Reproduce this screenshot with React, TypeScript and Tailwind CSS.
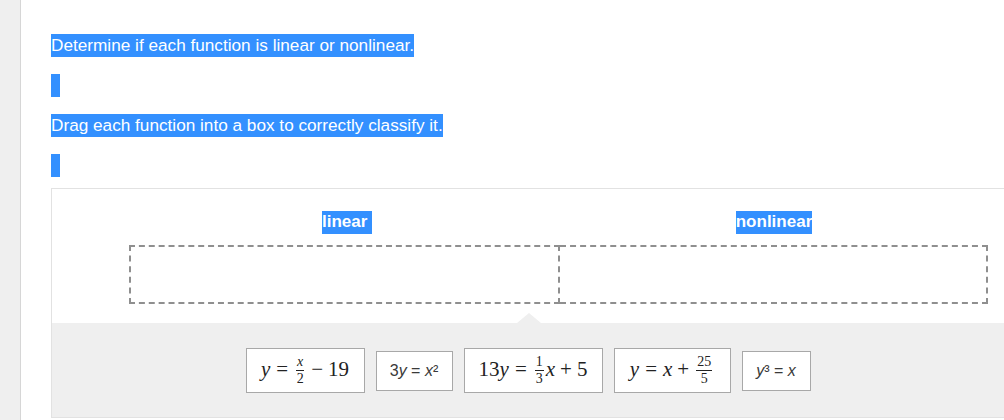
import React from "react";

const sel = "inline-block bg-[#3390ff] text-white";

function Frac({ n, d }: { n: React.ReactNode; d: string }) {
  return (
    <span className="mx-[2px] inline-flex flex-col items-center align-middle text-[14px] leading-[14px]">
      <span className="border-b border-[#222] px-[1px] pb-[1px]">{n}</span>
      <span className="pt-[1px]">{d}</span>
    </span>
  );
}

function MathTile({ w, children }: { w: string; children: React.ReactNode }) {
  return (
    <div
      className={`${w} flex h-[45px] items-center justify-center border border-[#a8a8a8] bg-white text-[21px] text-[#222]`}
      style={{ fontFamily: '"Liberation Serif", serif' }}
    >
      {children}
    </div>
  );
}

function TextTile({ w, children }: { w: string; children: React.ReactNode }) {
  return (
    <div className={`${w} mt-[2px] flex h-[40px] items-center justify-center border border-[#a8a8a8] bg-white text-[16px] text-[#3a3a3a]`}>
      {children}
    </div>
  );
}

const Rel = ({ c }: { c: string }) => <span className="mx-[6px]">{c}</span>;
const Bin = ({ c }: { c: string }) => <span className="mx-[5px]">{c}</span>;

export default function App() {
  return (
    <div
      className="flex h-[420px] w-[1004px] overflow-hidden bg-white"
      style={{ fontFamily: '"Liberation Sans", Arial, sans-serif' }}
    >
      <div className="h-full w-[21px] shrink-0 border-r border-[#d6d6d6] bg-[#efefef]" />
      <div className="shrink-0 pl-[30px] pt-[34px]">
        <div className="flex flex-col gap-[17px] text-[17.2px] leading-[23px]">
          <div className="h-[23px]">
            <span className={sel}>Determine if each function is linear or nonlinear. </span>
          </div>
          <div className="h-[23px]">
            <span className={`${sel} h-[23px] w-[9px]`} />
          </div>
          <div className="h-[23px]">
            <span className={sel}>Drag each function into a box to correctly classify it. </span>
          </div>
          <div className="h-[23px]">
            <span className={`${sel} h-[23px] w-[9px]`} />
          </div>
        </div>

        <div className="mt-[11px] w-[954px] border border-[#e2e2e2]">
          <div className="h-[134px] bg-white pt-[22px]">
            <div className="ml-[77px] grid w-[859px] grid-cols-[431px_428px]">
              <div className="flex h-[23px] justify-center">
                <span className={`${sel} ml-[5px] text-[17px] font-bold leading-[22px]`}>linear&nbsp;</span>
              </div>
              <div className="flex h-[23px] justify-center">
                <span className={`${sel} text-[17px] font-bold leading-[22px]`}>nonlinear</span>
              </div>
              <div className="mt-[11px] h-[59px] border-2 border-dashed border-[#8f8f8f]" />
              <div className="mt-[11px] h-[59px] border-2 border-l-0 border-dashed border-[#8f8f8f]" />
            </div>
          </div>
          <div className="relative flex h-[94px] items-center justify-center gap-[11px] bg-[#efefef]">
            <div className="absolute left-[465px] top-[-10px] h-0 w-0 border-x-[12px] border-b-[10px] border-x-transparent border-b-[#efefef]" />
            <MathTile w="w-[119px]">
              <i>y</i>
              <Rel c="=" />
              <Frac n={<i>x</i>} d="2" />
              <Bin c="−" />
              <span>19</span>
            </MathTile>
            <TextTile w="w-[77px]">
              <span>
                3<i>y</i> = <i>x</i>²
              </span>
            </TextTile>
            <MathTile w="w-[139px]">
              <span>13</span>
              <i>y</i>
              <Rel c="=" />
              <Frac n="1" d="3" />
              <i>x</i>
              <Bin c="+" />
              <span>5</span>
            </MathTile>
            <MathTile w="w-[117px]">
              <i>y</i>
              <Rel c="=" />
              <i>x</i>
              <Bin c="+" />
              <Frac n="25" d="5" />
            </MathTile>
            <TextTile w="w-[69px]">
              <span>
                <i>y</i>³ = <i>x</i>
              </span>
            </TextTile>
          </div>
        </div>
      </div>
    </div>
  );
}
